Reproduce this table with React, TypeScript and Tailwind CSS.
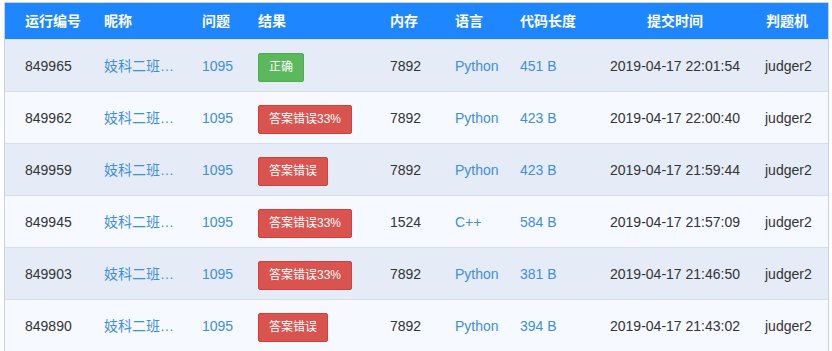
import React from "react";

type Row = {
  id: string;
  mem: string;
  lang: string;
  len: string;
  time: string;
  result: "ok" | "wa" | "wa33";
};

const rows: Row[] = [
  { id: "849965", mem: "7892", lang: "Python", len: "451 B", time: "2019-04-17 22:01:54", result: "ok" },
  { id: "849962", mem: "7892", lang: "Python", len: "423 B", time: "2019-04-17 22:00:40", result: "wa33" },
  { id: "849959", mem: "7892", lang: "Python", len: "423 B", time: "2019-04-17 21:59:44", result: "wa" },
  { id: "849945", mem: "1524", lang: "C++", len: "584 B", time: "2019-04-17 21:57:09", result: "wa33" },
  { id: "849903", mem: "7892", lang: "Python", len: "381 B", time: "2019-04-17 21:46:50", result: "wa33" },
  { id: "849890", mem: "7892", lang: "Python", len: "394 B", time: "2019-04-17 21:43:02", result: "wa" },
];

function Badge({ r }: { r: Row["result"] }) {
  if (r === "ok") {
    return (
      <span className="inline-block rounded-[2px] border border-[#4cae4c] bg-[#5cb85c] px-[10px] py-[5px] text-[12px] leading-[17px] text-white">
        正确
      </span>
    );
  }
  return (
    <span className="inline-block rounded-[2px] border border-[#d43f3a] bg-[#d9534f] px-[10px] py-[5px] text-[12px] leading-[17px] text-white">
      {r === "wa33" ? "答案错误33%" : "答案错误"}
    </span>
  );
}

const grid = "grid grid-cols-[79px_98px_56px_132px_65px_65px_90px_155px_83px]";

export default function App() {
  return (
    <div
      className="bg-white pl-[4px] pt-[2px] text-[14px]"
      style={{ fontFamily: '"Liberation Sans", "Noto Sans CJK SC", sans-serif' }}
    >
      <div className="w-[825px] border border-[#c9d3de] border-b-0">
        <div className={`${grid} h-[37px] items-center border-b border-[#d9dfe7] bg-[#1e87ff] font-bold text-white`}>
          <div className="pl-[20px]">运行编号</div>
          <div className="pl-[20px]">昵称</div>
          <div className="pl-[20px]">问题</div>
          <div className="pl-[20px]">结果</div>
          <div className="pl-[20px]">内存</div>
          <div className="pl-[20px]">语言</div>
          <div className="pl-[20px]">代码长度</div>
          <div className="pl-[57px]">提交时间</div>
          <div className="pl-[21px]">判题机</div>
        </div>
        {rows.map((row, i) => (
          <div
            key={row.id}
            className={`${grid} h-[52px] items-center border-b border-[#d9dfe7] pt-[1px] ${
              i % 2 === 0 ? "bg-[#e5ecf7]" : "bg-[#f6f9ff]"
            } text-[#333]`}
          >
            <div className="pl-[20px]">{row.id}</div>
            <div className="pl-[20px] text-[#3f8fdb]">妓科二班…</div>
            <div className="pl-[20px] text-[#3f8fdb]">1095</div>
            <div className="pl-[20px] pt-[2px]">
              <Badge r={row.result} />
            </div>
            <div className="pl-[20px]">{row.mem}</div>
            <div className="pl-[20px] text-[#3f8fdb]">{row.lang}</div>
            <div className="pl-[20px] text-[#3f8fdb]">{row.len}</div>
            <div className="pl-[20px]">{row.time}</div>
            <div className="pl-[20px]">judger2</div>
          </div>
        ))}
      </div>
    </div>
  );
}
